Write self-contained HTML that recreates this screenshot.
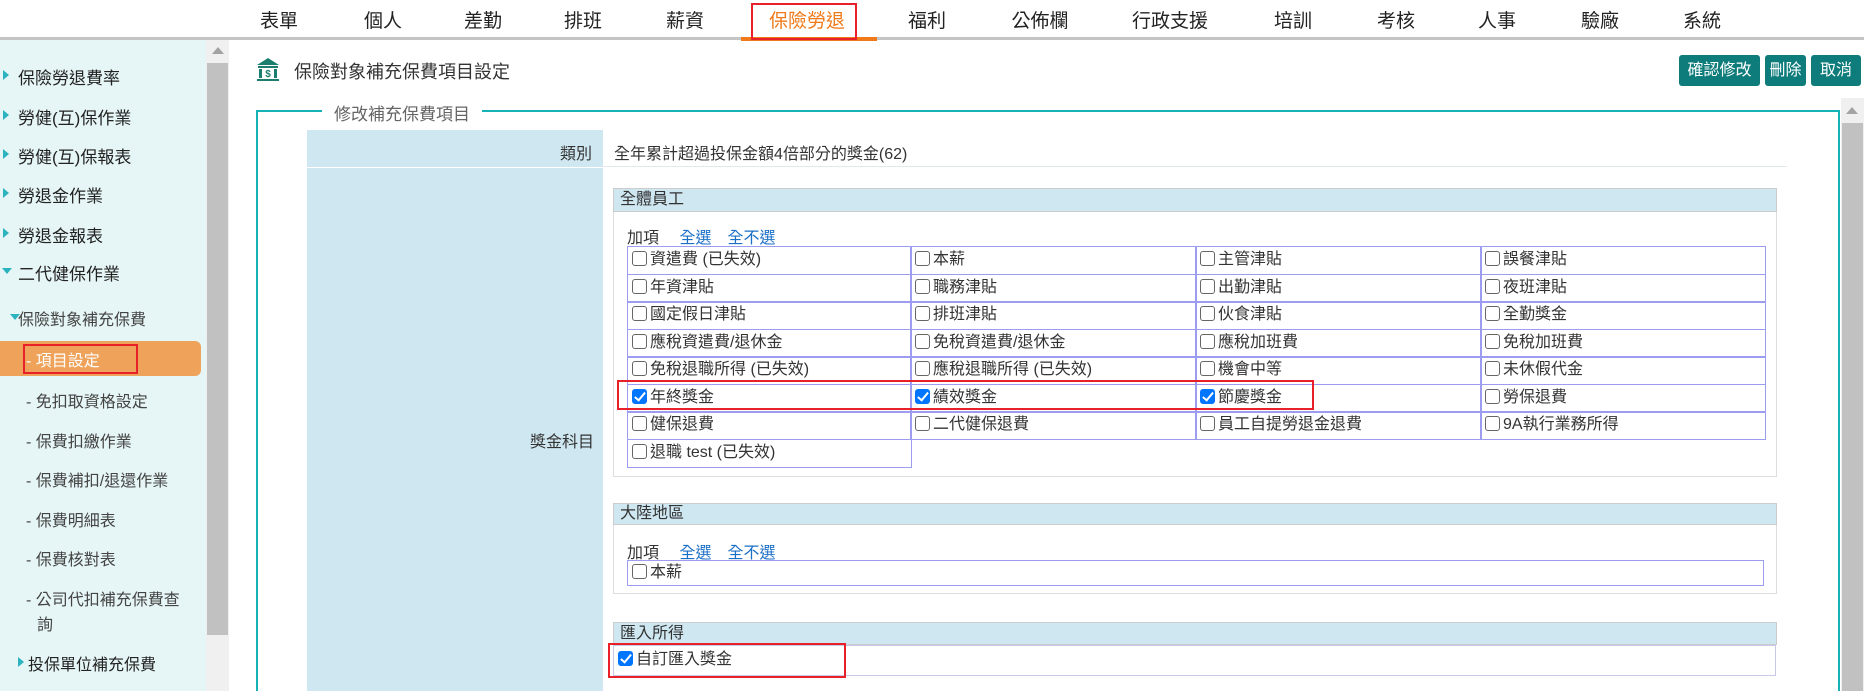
<!DOCTYPE html>
<html><head><meta charset="utf-8"><style>
*{box-sizing:border-box;margin:0;padding:0}
html,body{width:1864px;height:691px;overflow:hidden}
body{background:#fff;font-family:"Liberation Sans","Noto Sans CJK TC",sans-serif;color:#333;position:relative}
.a{position:absolute;white-space:nowrap}
.nav{font-size:19px;color:#222;top:6px;transform:translateX(-50%)}
.side{font-size:17px;color:#222;left:18px}
.sub{font-size:16px;color:#444;left:26px}
.tri{position:absolute;left:3px;width:0;height:0;border-top:5px solid transparent;border-bottom:5px solid transparent;border-left:6px solid #2bb3c0}
.tridn{position:absolute;width:0;height:0;border-left:5px solid transparent;border-right:5px solid transparent;border-top:6px solid #2bb3c0}
.btn{position:absolute;top:55px;height:31px;background:#0e7c7b;color:#fff;font-size:16px;line-height:31px;text-align:center;border-radius:3px}
.cb{display:inline-block;width:15px;height:15px;border:1px solid #666;border-radius:3px;vertical-align:-2px;margin-right:3px;background:#fff;position:relative}
.cb.on{background:#0075ff;border-color:#0075ff}
.cb.on:after{content:"";position:absolute;left:4px;top:0px;width:4px;height:9px;border:solid #fff;border-width:0 2px 2px 0;transform:rotate(40deg)}
.cell{position:absolute;border:1.5px solid #9c9cf0;font-size:16px;line-height:25px;padding-left:4px;color:#333}
.ph{position:absolute;left:613px;width:1164px;background:#cfe7f0;border:1px solid #ccc;font-size:16px;padding-left:6px;color:#333}
.pb{position:absolute;left:613px;width:1164px;border:1px solid #ddd;border-top:none}
.lnk{color:#1a6fc7}
.red{position:absolute;border:2px solid #e8202a}
</style></head><body>
<div class="a nav" style="left:279px">表單</div>
<div class="a nav" style="left:383px">個人</div>
<div class="a nav" style="left:483px">差勤</div>
<div class="a nav" style="left:583px">排班</div>
<div class="a nav" style="left:685px">薪資</div>
<div class="a nav" style="left:807px;color:#f07a1a">保險勞退</div>
<div class="a nav" style="left:927px">福利</div>
<div class="a nav" style="left:1040px">公佈欄</div>
<div class="a nav" style="left:1170px">行政支援</div>
<div class="a nav" style="left:1293px">培訓</div>
<div class="a nav" style="left:1396px">考核</div>
<div class="a nav" style="left:1497px">人事</div>
<div class="a nav" style="left:1600px">驗廠</div>
<div class="a nav" style="left:1702px">系統</div>
<div class="a" style="left:0;top:37px;width:1864px;height:3px;background:#c4c4c4"></div>
<div class="a" style="left:741px;top:37px;width:136px;height:4px;background:#f07a1a"></div>
<div class="red" style="left:751px;top:3px;width:106px;height:37px"></div>
<div class="a" style="left:0;top:40px;width:206px;height:651px;background:#e6f5f5"></div>
<div class="a" style="left:206px;top:40px;width:23px;height:651px;background:#f0f0f0"></div>
<div class="a" style="left:207px;top:63px;width:21px;height:572px;background:#c1c1c1"></div>
<div class="a" style="left:212px;top:47px;border-left:6px solid transparent;border-right:6px solid transparent;border-bottom:7px solid #a3a3a3"></div>
<div class="tri" style="top:70px"></div><div class="a side" style="top:64px">保險勞退費率</div>
<div class="tri" style="top:110px"></div><div class="a side" style="top:104px">勞健(互)保作業</div>
<div class="tri" style="top:149px"></div><div class="a side" style="top:143px">勞健(互)保報表</div>
<div class="tri" style="top:188px"></div><div class="a side" style="top:182px">勞退金作業</div>
<div class="tri" style="top:228px"></div><div class="a side" style="top:222px">勞退金報表</div>
<div class="tridn" style="left:2px;top:268px"></div><div class="a side" style="top:260px">二代健保作業</div>
<div class="tridn" style="left:10px;top:314px"></div><div class="a sub" style="left:18px;top:306px">保險對象補充保費</div>
<div class="a" style="left:0;top:341px;width:201px;height:35px;background:#eea25a;border-radius:0 6px 6px 0"></div>
<div class="a sub" style="top:347px;color:#fff">- 項目設定</div>
<div class="red" style="left:23px;top:344px;width:115px;height:30px"></div>
<div class="a sub" style="top:388px">- 免扣取資格設定</div>
<div class="a sub" style="top:428px">- 保費扣繳作業</div>
<div class="a sub" style="top:467px">- 保費補扣/退還作業</div>
<div class="a sub" style="top:507px">- 保費明細表</div>
<div class="a sub" style="top:546px">- 保費核對表</div>
<div class="a sub" style="top:586px">- 公司代扣補充保費查</div>
<div class="a sub" style="top:611px;left:37px">詢</div>
<div class="tri" style="left:18px;top:657px"></div><div class="a sub" style="top:651px;left:28px;color:#222">投保單位補充保費</div>
<svg class="a" style="left:256px;top:57px" width="24" height="26" viewBox="0 0 24 26"><path d="M12 1 L23 8 L1 8 Z" fill="#1b7d6e"/><rect x="2" y="9" width="20" height="2" fill="#1b7d6e"/><rect x="3" y="12" width="3" height="9" fill="#1b7d6e"/><rect x="18" y="12" width="3" height="9" fill="#1b7d6e"/><text x="12" y="20" font-size="10" font-weight="bold" fill="#1b7d6e" text-anchor="middle" font-family="Liberation Sans">$</text><rect x="1" y="22" width="22" height="2" fill="#1b7d6e"/></svg>
<div class="a" style="left:294px;top:58px;font-size:18px;color:#333">保險對象補充保費項目設定</div>
<div class="btn" style="left:1679px;width:81px">確認修改</div>
<div class="btn" style="left:1765px;width:41px">刪除</div>
<div class="btn" style="left:1811px;width:50px">取消</div>
<div class="a" style="left:1841px;top:98px;width:23px;height:593px;background:#f0f0f0"></div>
<div class="a" style="left:1842px;top:123px;width:21px;height:568px;background:#c1c1c1"></div>
<div class="a" style="left:1846px;top:107px;border-left:6px solid transparent;border-right:6px solid transparent;border-bottom:7px solid #a3a3a3"></div>
<div class="a" style="left:256px;top:110px;width:1584px;height:581px;border:2px solid #17b2b5;border-bottom:none"></div>
<div class="a" style="left:322px;top:100px;padding:0 12px;background:#fff;font-size:17px;color:#666">修改補充保費項目</div>
<div class="a" style="left:307px;top:130px;width:296px;height:37px;background:#cfe7f0"></div>
<div class="a" style="left:307px;top:168px;width:296px;height:523px;background:#cfe7f0"></div>
<div class="a" style="left:603px;top:166px;width:1184px;height:1px;background:#e3e8ea"></div>
<div class="a" style="left:560px;top:140px;font-size:16px">類別</div>
<div class="a" style="left:614px;top:140px;font-size:16px">全年累計超過投保金額4倍部分的獎金(62)</div>
<div class="a" style="left:530px;top:428px;font-size:16px">獎金科目</div>
<div class="ph" style="top:188px;height:24px;line-height:22px">全體員工</div>
<div class="pb" style="top:212px;height:265px"></div>
<div class="a" style="left:627px;top:224px;font-size:16px">加項　 <span class="lnk">全選</span>　<span class="lnk">全不選</span></div>
<div id="g"></div>
<div class="ph" style="top:503px;height:22px;line-height:20px">大陸地區</div>
<div class="pb" style="top:525px;height:69px"></div>
<div class="a" style="left:627px;top:539px;font-size:16px">加項　 <span class="lnk">全選</span>　<span class="lnk">全不選</span></div>
<div class="cell" style="left:627px;top:560px;width:1137px;height:26px;line-height:23px"><span class="cb"></span>本薪</div>
<div class="ph" style="top:622px;height:23px;line-height:21px">匯入所得</div>
<div class="cell" style="left:613px;top:645px;width:1163px;height:31px;line-height:28px;border-color:#c8c8e8"><span class="cb on"></span>自訂匯入獎金</div>
<div class="red" style="left:608px;top:643px;width:238px;height:35px"></div>
<div class="red" style="left:617px;top:380px;width:697px;height:30px"></div>
<script>
var items=[["資遣費 (已失效)","本薪","主管津貼","誤餐津貼"],["年資津貼","職務津貼","出勤津貼","夜班津貼"],["國定假日津貼","排班津貼","伙食津貼","全勤獎金"],["應稅資遣費/退休金","免稅資遣費/退休金","應稅加班費","免稅加班費"],["免稅退職所得 (已失效)","應稅退職所得 (已失效)","機會中等","未休假代金"],["*年終獎金","*績效獎金","*節慶獎金","勞保退費"],["健保退費","二代健保退費","員工自提勞退金退費","9A執行業務所得"],["退職 test (已失效)"]];
var xs=[627,910,1195,1480,1764],h="";
items.forEach(function(r,i){r.forEach(function(t,j){var on=t[0]=="*";if(on)t=t.slice(1);
h+='<div class="cell" style="left:'+xs[j]+'px;top:'+(246+i*27.5)+'px;width:'+(xs[j+1]-xs[j]+1.5)+'px;height:29px"><span class="cb'+(on?' on':'')+'"></span>'+t+'</div>';});});
document.getElementById("g").innerHTML=h;
</script>
</body></html>
